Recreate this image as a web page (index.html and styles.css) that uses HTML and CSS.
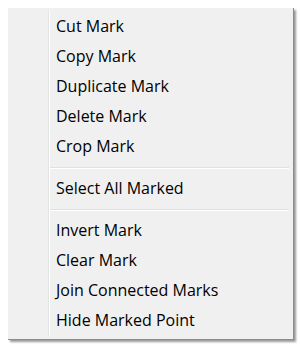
FILE: index.html
```html
<!DOCTYPE html>
<html>
<head>
<meta charset="utf-8">
<link rel="stylesheet" href="styles.css">
</head>
<body>
<div class="menu">
  <div class="item">Cut Mark</div>
  <div class="item">Copy Mark</div>
  <div class="item">Duplicate Mark</div>
  <div class="item">Delete Mark</div>
  <div class="item">Crop Mark</div>
  <div class="sep"></div>
  <div class="item">Select All Marked</div>
  <div class="sep"></div>
  <div class="item">Invert Mark</div>
  <div class="item">Clear Mark</div>
  <div class="item">Join Connected Marks</div>
  <div class="item">Hide Marked Point</div>
</div>
</body>
</html>
```
FILE: styles.css
```css
html, body {
  margin: 0;
  padding: 0;
  background: #ffffff;
  overflow: hidden;
}
body {
  width: 300px;
  height: 348px;
  position: relative;
}
.menu {
  margin: 8px 0 0 8px;
  width: 286px;
  box-sizing: border-box;
  padding: 3px 3px 4px 3px;
  background-color: #f0f0f0;
  background-image: linear-gradient(to right, transparent 40px, #e2e3e3 40px, #e2e3e3 41px, #ffffff 41px, #ffffff 42px, transparent 42px);
  background-size: 100% calc(100% - 4px);
  background-position: 0 2px;
  background-repeat: no-repeat;
  border-right: 1px solid #8c8c8c;
  border-bottom: 1px solid #8c8c8c;
  box-shadow: 2px 2px 2px rgba(0, 0, 0, 0.4);
  font-family: "Open Sans", "Noto Sans", sans-serif;
  font-size: 16px;
  color: #000000;
}
.item {
  height: 30px;
  line-height: 30px;
  padding-left: 45px;
  white-space: nowrap;
}
.sep {
  height: 12px;
  box-sizing: border-box;
  margin: 0 1px 0 39px;
  padding-top: 6px;
}
.sep::before {
  content: "";
  display: block;
  border-top: 1px solid #e0e0e0;
  border-bottom: 1px solid #ffffff;
}
```
